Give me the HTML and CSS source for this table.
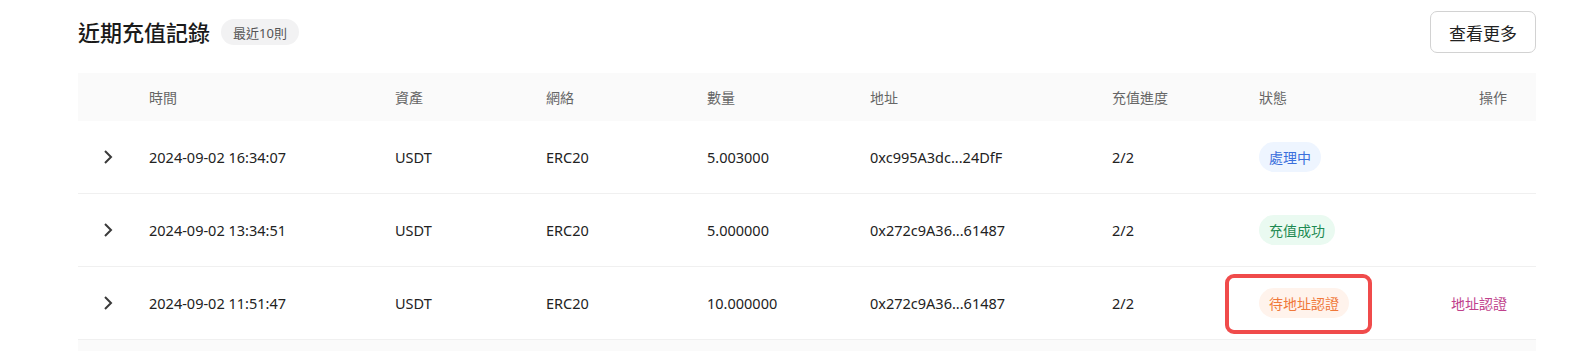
FILE: index.html
```html
<!DOCTYPE html>
<html lang="zh-Hant">
<head>
<meta charset="utf-8">
<title>近期充值記錄</title>
<link rel="stylesheet" href="styles.css">
</head>
<body>
<section class="records">
  <div class="records-head">
    <div class="title-group">
      <h2 class="title">近期充值記錄</h2>
      <span class="count-badge">最近10則</span>
    </div>
    <button class="more-btn">查看更多</button>
  </div>
  <div class="table">
    <div class="row head">
      <div></div>
      <div>時間</div>
      <div>資產</div>
      <div>網絡</div>
      <div>數量</div>
      <div>地址</div>
      <div>充值進度</div>
      <div>狀態</div>
      <div class="op">操作</div>
    </div>
    <div class="row">
      <div class="chev"><svg width="10" height="16" viewBox="0 0 10 16"><path d="M2 2 L8 8 L2 14" fill="none" stroke="#3a3a3a" stroke-width="2"/></svg></div>
      <div>2024-09-02 16:34:07</div>
      <div>USDT</div>
      <div>ERC20</div>
      <div>5.003000</div>
      <div>0xc995A3dc...24DfF</div>
      <div>2/2</div>
      <div><span class="status blue">處理中</span></div>
      <div class="op"></div>
    </div>
    <div class="row">
      <div class="chev"><svg width="10" height="16" viewBox="0 0 10 16"><path d="M2 2 L8 8 L2 14" fill="none" stroke="#3a3a3a" stroke-width="2"/></svg></div>
      <div>2024-09-02 13:34:51</div>
      <div>USDT</div>
      <div>ERC20</div>
      <div>5.000000</div>
      <div>0x272c9A36...61487</div>
      <div>2/2</div>
      <div><span class="status green">充值成功</span></div>
      <div class="op"></div>
    </div>
    <div class="row">
      <div class="chev"><svg width="10" height="16" viewBox="0 0 10 16"><path d="M2 2 L8 8 L2 14" fill="none" stroke="#3a3a3a" stroke-width="2"/></svg></div>
      <div>2024-09-02 11:51:47</div>
      <div>USDT</div>
      <div>ERC20</div>
      <div>10.000000</div>
      <div>0x272c9A36...61487</div>
      <div>2/2</div>
      <div><span class="status orange highlighted">待地址認證<span class="mark"></span></span></div>
      <div class="op"><a class="op-link" href="#">地址認證</a></div>
    </div>
    <div class="row tail"></div>
  </div>
</section>
</body>
</html>
```
FILE: styles.css
```css
* { box-sizing: border-box; }
html, body { margin: 0; padding: 0; background: #fff; }
body {
  font-family: "Noto Sans", "Noto Sans CJK TC", sans-serif;
  color: #222;
  overflow: hidden;
}
.records {
  padding: 11px 54px 0 78px;
}
.records-head {
  display: flex;
  align-items: center;
  justify-content: space-between;
  height: 42px;
}
.title-group {
  display: flex;
  align-items: center;
  gap: 11px;
}
.title {
  margin: 0;
  font-size: 22px;
  font-weight: 500;
  color: #1a1a1a;
  line-height: 1;
}
.count-badge {
  display: inline-flex;
  align-items: center;
  height: 26px;
  padding: 0 12px;
  border-radius: 13px;
  background: #f2f2f3;
  color: #555;
  font-size: 13px;
}
.more-btn {
  height: 42px;
  width: 106px;
  border: 1px solid #d2d2d2;
  border-radius: 7px;
  background: #fff;
  font-family: inherit;
  font-size: 17px;
  color: #222;
  padding: 0;
}
.table {
  margin-top: 20px;
}
.row {
  display: grid;
  grid-template-columns: 71px 246px 151px 161px 163px 242px 147px 1fr 120px;
  align-items: center;
  height: 73px;
  border-bottom: 1px solid #f0f0f0;
  font-size: 14.5px;
  padding-right: 29px;
}
.row.head {
  height: 48px;
  background: #fafafa;
  border-bottom: none;
  color: #666;
  font-size: 14px;
}
.row.tail {
  height: 20px;
  background: #fafafa;
  border-bottom: none;
}
.chev {
  padding-left: 25px;
  display: flex;
  align-items: center;
}
.chev svg { display: block; }
.op { text-align: right; }
.status {
  display: inline-flex;
  align-items: center;
  height: 30px;
  padding: 0 10px;
  border-radius: 15px;
  font-size: 14px;
}
.status.blue { background: #eef5ff; color: #3b6fdc; }
.status.green { background: #eafaf1; color: #1d8a52; }
.status.orange { background: #fff3ec; color: #f0783a; }
.highlighted { position: relative; }
.mark {
  position: absolute;
  left: -34px;
  top: -14px;
  width: 147px;
  height: 60px;
  border: 4px solid #f04b4b;
  border-radius: 9px;
}
.op-link {
  color: #c0418c;
  text-decoration: none;
  font-size: 14px;
}
```
